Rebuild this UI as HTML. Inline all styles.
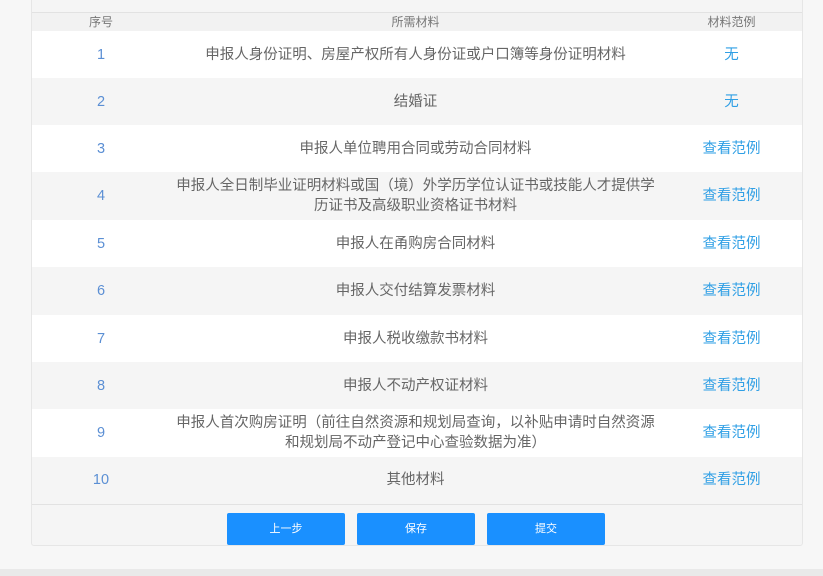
<!DOCTYPE html><html><head><meta charset="utf-8"><style>
*{margin:0;padding:0;box-sizing:border-box}
body{width:823px;height:576px;background:#f7f7f7;font-family:"Liberation Sans","Noto Sans CJK SC",sans-serif;position:relative;overflow:hidden}
.panel{position:absolute;left:31px;top:-5px;width:772px;height:551px;background:#f5f5f5;border:1px solid #e6e6e6;border-radius:3px}
table{position:absolute;left:0;top:16px;width:770px;border-collapse:collapse;border-top:1px solid #e2e2e2;border-bottom:1px solid #e2e2e2}
th{height:18px;font-weight:normal;font-size:12px;color:#777;background:#f2f2f2;line-height:18px}
td{text-align:center;font-size:14.5px;color:#666;line-height:20px}
tr.w td{background:#fff}
tr.g td{background:#f5f5f5}
td.n{color:#5b8fd4;width:138px}
td.e{color:#2f9fe5;width:141px}
.btn{position:absolute;top:513px;width:118px;height:32px;background:#1a90ff;color:#fff;font-size:11px;text-align:center;line-height:32px;border-radius:2px}
.bot{position:absolute;left:0;top:569px;width:823px;height:7px;background:#e9e9e9}
</style></head><body>
<div class="panel"><table>
<tr><th>序号</th><th>所需材料</th><th>材料范例</th></tr>
<tr class="w" style="height:47px"><td class="n">1</td><td>申报人身份证明、房屋产权所有人身份证或户口簿等身份证明材料</td><td class="e">无</td></tr>
<tr class="g" style="height:47px"><td class="n">2</td><td>结婚证</td><td class="e">无</td></tr>
<tr class="w" style="height:47px"><td class="n">3</td><td>申报人单位聘用合同或劳动合同材料</td><td class="e">查看范例</td></tr>
<tr class="g" style="height:48px"><td class="n">4</td><td>申报人全日制毕业证明材料或国（境）外学历学位认证书或技能人才提供学<br>历证书及高级职业资格证书材料</td><td class="e">查看范例</td></tr>
<tr class="w" style="height:47px"><td class="n">5</td><td>申报人在甬购房合同材料</td><td class="e">查看范例</td></tr>
<tr class="g" style="height:48px"><td class="n">6</td><td>申报人交付结算发票材料</td><td class="e">查看范例</td></tr>
<tr class="w" style="height:47px"><td class="n">7</td><td>申报人税收缴款书材料</td><td class="e">查看范例</td></tr>
<tr class="g" style="height:47px"><td class="n">8</td><td>申报人不动产权证材料</td><td class="e">查看范例</td></tr>
<tr class="w" style="height:48px"><td class="n">9</td><td>申报人首次购房证明（前往自然资源和规划局查询，以补贴申请时自然资源<br>和规划局不动产登记中心查验数据为准）</td><td class="e">查看范例</td></tr>
<tr class="g" style="height:47px"><td class="n">10</td><td>其他材料</td><td class="e">查看范例</td></tr>
</table></div>
<div class="btn" style="left:227px">上一步</div>
<div class="btn" style="left:357px">保存</div>
<div class="btn" style="left:487px">提交</div>
<div class="bot"></div>
</body></html>
